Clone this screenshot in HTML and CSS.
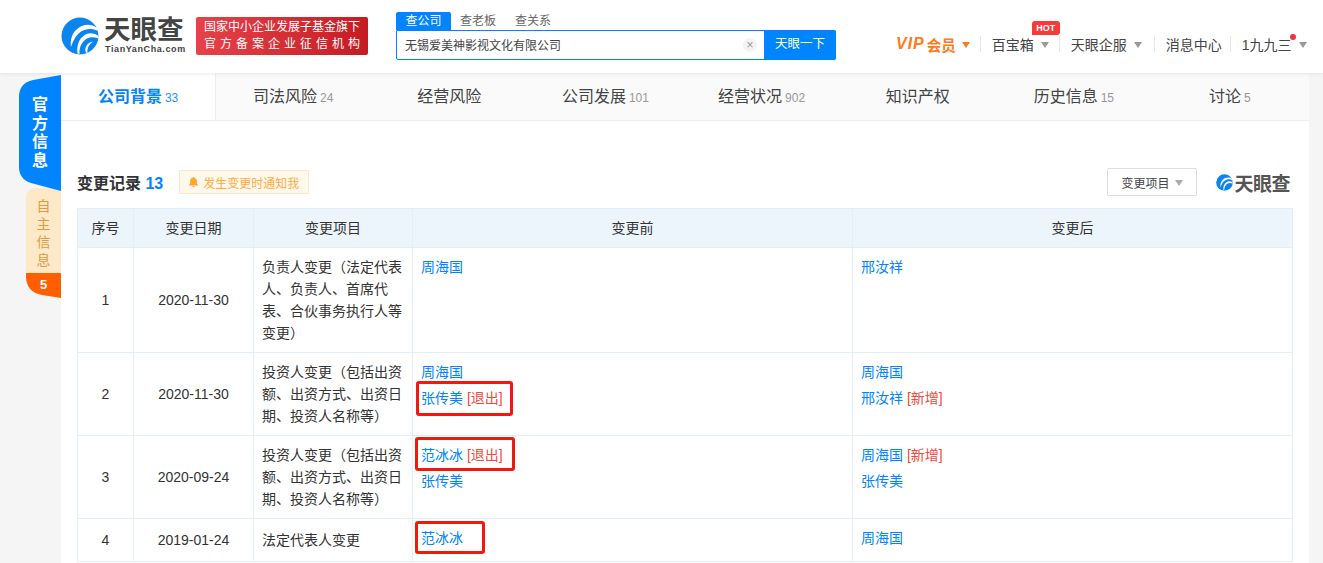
FILE: index.html
```html
<!DOCTYPE html>
<html>

<head>
    <meta charset="UTF-8">
    <title>变更记录</title>
    <link rel="stylesheet" href="styles.css">
</head>

<body>
    <div class="header">
        <div class="logo">
            <svg class="logo-mark" viewBox="0 0 38 38">
                <circle cx="19" cy="19" r="18.5" fill="#0b85ee" />
                <path d="M36 11C30 6 21 7 15 13C11 17 9 23 10 30C12 24 15 18 20 14.500C25 11.500 31 11 37 14Z" fill="#fff" />
                <path d="M37.500 19C33 15.500 27 15.500 23 18.500C18 22 15.500 28 16.500 36.500L18.500 37C18 30 21 24.500 26 21.500C29 19.800 33 19.800 37.500 21.500Z" fill="#fff" />
                <path d="M32 24.500C28 25 25.500 27.500 24.500 31C24 33 24.500 35 25.500 36L26.500 35.800C26 31 28 27.500 32 24.500Z" fill="#fff" />
            </svg>
            <div class="logo-text">
                <div class="logo-name">天眼查</div>
                <div class="logo-site">TianYanCha.com</div>
            </div>
        </div>
        <div class="badge">
            <div>国家中小企业发展子基金旗下</div>
            <div class="badge-wide">官方备案企业征信机构</div>
        </div>
        <div class="search">
            <div class="search-tabs">
                <span class="search-tab active">查公司</span>
                <span class="search-tab">查老板</span>
                <span class="search-tab">查关系</span>
            </div>
            <div class="search-box">
                <div class="search-input">无锡爱美神影视文化有限公司</div>
                <span class="search-clear">&times;</span>
                <div class="search-btn">天眼一下</div>
            </div>
        </div>
        <div class="nav">
            <div class="nav-item vip"><span class="vip-mark">VIP</span>会员<i class="caret"></i></div>
            <div class="nav-item">百宝箱<i class="caret"></i><span class="hot">HOT</span></div>
            <div class="nav-item">天眼企服<i class="caret"></i></div>
            <div class="nav-item nav-msg">消息中心</div>
            <div class="nav-item user">1九九三<span class="dot"></span><i class="caret"></i></div>
        </div>
    </div>

    <div class="page">
        <div class="side">
            <div class="side-main">官方信息</div>
            <div class="side-own">
                <div class="side-own-text">自主信息</div>
                <div class="side-own-num">5</div>
            </div>
        </div>

        <div class="main">
            <div class="tabs">
                <div class="tab active">公司背景<span class="num">33</span></div>
                <div class="tab">司法风险<span class="num">24</span></div>
                <div class="tab">经营风险</div>
                <div class="tab">公司发展<span class="num">101</span></div>
                <div class="tab">经营状况<span class="num">902</span></div>
                <div class="tab">知识产权</div>
                <div class="tab">历史信息<span class="num">15</span></div>
                <div class="tab">讨论<span class="num">5</span></div>
            </div>

            <div class="section">
                <div class="section-head">
                    <div class="section-title">变更记录 <span class="count">13</span></div>
                    <div class="notify">
                        <svg class="bell" viewBox="0 0 12 12">
                            <path d="M6 0.500C6.500 0.500 6.900 0.900 6.900 1.400C8.700 1.800 9.700 3.200 9.700 5V7.800L11 9.300V9.800H1V9.300L2.300 7.800V5C2.300 3.200 3.300 1.800 5.100 1.400C5.100 0.900 5.500 0.500 6 0.500ZM4.700 10.400H7.300C7.300 11.100 6.700 11.700 6 11.700C5.300 11.700 4.700 11.100 4.700 10.400Z" fill="#ffa72a" />
                        </svg>
                        发生变更时通知我
                    </div>
                    <div class="filter">变更项目<i class="caret"></i></div>
                    <div class="mini-logo">
                        <svg class="mini-mark" viewBox="0 0 38 38">
                            <circle cx="19" cy="19" r="18.5" fill="#0b85ee" />
                            <path d="M36 11C30 6 21 7 15 13C11 17 9 23 10 30C12 24 15 18 20 14.500C25 11.500 31 11 37 14Z" fill="#fff" />
                            <path d="M37.500 19C33 15.500 27 15.500 23 18.500C18 22 15.500 28 16.500 36.500L18.500 37C18 30 21 24.500 26 21.500C29 19.800 33 19.800 37.500 21.500Z" fill="#fff" />
                        </svg>
                        <span>天眼查</span>
                    </div>
                </div>

                <table class="records">
                    <colgroup>
                        <col class="c-no">
                        <col class="c-date">
                        <col class="c-item">
                        <col class="c-before">
                        <col class="c-after">
                    </colgroup>
                    <tr>
                        <th>序号</th>
                        <th>变更日期</th>
                        <th>变更项目</th>
                        <th>变更前</th>
                        <th>变更后</th>
                    </tr>
                    <tr>
                        <td class="mid">1</td>
                        <td class="mid">2020-11-30</td>
                        <td>负责人变更（法定代表人、负责人、首席代表、合伙事务执行人等变更）</td>
                        <td class="top">
                            <div class="name">周海国</div>
                        </td>
                        <td class="top">
                            <div class="name">邢汝祥</div>
                        </td>
                    </tr>
                    <tr>
                        <td class="mid">2</td>
                        <td class="mid">2020-11-30</td>
                        <td>投资人变更（包括出资额、出资方式、出资日期、投资人名称等）</td>
                        <td class="top">
                            <div class="name">周海国</div>
                            <div class="name">张传美 <span class="tag">[退出]</span><span class="mark mark-a"></span></div>
                        </td>
                        <td class="top">
                            <div class="name">周海国</div>
                            <div class="name">邢汝祥 <span class="tag">[新增]</span></div>
                        </td>
                    </tr>
                    <tr>
                        <td class="mid">3</td>
                        <td class="mid">2020-09-24</td>
                        <td>投资人变更（包括出资额、出资方式、出资日期、投资人名称等）</td>
                        <td class="top">
                            <div class="name">范冰冰 <span class="tag">[退出]</span><span class="mark mark-b"></span></div>
                            <div class="name">张传美</div>
                        </td>
                        <td class="top">
                            <div class="name">周海国 <span class="tag">[新增]</span></div>
                            <div class="name">张传美</div>
                        </td>
                    </tr>
                    <tr>
                        <td class="mid">4</td>
                        <td class="mid">2019-01-24</td>
                        <td>法定代表人变更</td>
                        <td class="top">
                            <div class="name">范冰冰<span class="mark mark-c"></span></div>
                        </td>
                        <td class="top">
                            <div class="name">周海国</div>
                        </td>
                    </tr>
                </table>
            </div>
        </div>
    </div>
</body>

</html>
```

FILE: styles.css
```css
* {
    box-sizing: border-box;
}

html,
body {
    height: 563px;
    overflow: hidden;
}

body {
    margin: 0;
    background-color: #f5f5f5;
    color: #333;
    font-family: "Liberation Sans", "Noto Sans CJK SC", sans-serif;
    font-size: 14px;
}

.caret {
    display: inline-block;
    width: 0;
    height: 0;
    margin-top: 1px;
    border-left: 4.5px solid transparent;
    border-right: 4.5px solid transparent;
    border-top: 6px solid #999;
}

/* header */
.header {
    display: flex;
    height: 73px;
    padding: 12px 0 0 61px;
    background-color: #fff;
    box-shadow: 0 1px 4px rgba(0, 0, 0, 0.08);
    position: relative;
    z-index: 2;
}

.logo {
    display: flex;
    height: 38px;
    margin-top: 5px;
}

.logo-mark {
    width: 38px;
    height: 38px;
}

.logo-text {
    margin-left: 5px;
    width: 92px;
}

.logo-name {
    height: 27px;
    color: #444;
    font-size: 26.500px;
    font-weight: bold;
    line-height: 26px;
}

.logo-site {
    color: #444;
    font-size: 9px;
    font-weight: bold;
    line-height: 10px;
    letter-spacing: 0.600px;
    padding-left: 1px;
}

.badge {
    width: 172px;
    height: 38px;
    margin-top: 5px;
    padding: 2px 8px;
    border-radius: 2px;
    background: linear-gradient(90deg, #e6424a, #c51c22);
    color: #fff;
    font-size: 12px;
    line-height: 17px;
    white-space: nowrap;
}

.badge-wide {
    letter-spacing: 4px;
}

.search {
    width: 440px;
    margin-left: 28px;
}

.search-tabs {
    display: flex;
    height: 18px;
    font-size: 12px;
    line-height: 18px;
    color: #666;
}

.search-tab {
    margin-right: 19px;
}

.search-tab.active {
    width: 55px;
    margin-right: 9px;
    border-radius: 2px 2px 0 0;
    background-color: #0084ff;
    color: #fff;
    text-align: center;
}

.search-box {
    display: flex;
    align-items: center;
    height: 30px;
    border: 1px solid #0084ff;
    border-radius: 0 2px 2px 2px;
}

.search-input {
    flex: 1;
    padding: 0 0 2px 8px;
    color: #444;
    font-size: 12px;
}

.search-clear {
    width: 14px;
    height: 14px;
    margin-right: 7px;
    border-radius: 50%;
    background-color: #f3f3f3;
    color: #999;
    font-size: 12px;
    line-height: 14px;
    text-align: center;
}

.search-btn {
    width: 72px;
    height: 30px;
    margin-right: -1px;
    border-radius: 0 2px 2px 0;
    background-color: #0084ff;
    color: #fff;
    font-size: 12.500px;
    line-height: 28px;
    text-align: center;
}

.nav {
    display: flex;
    align-items: center;
    height: 16px;
    margin: 24px 0 0 60px;
    color: #444;
}

.nav-item {
    display: flex;
    align-items: center;
    position: relative;
    height: 16px;
    padding: 0 10px 0 11px;
    border-left: 1px solid #e8e8e8;
    white-space: nowrap;
}

.nav-item .caret {
    margin-left: 7px;
}

.nav-msg {
    margin-left: 2px;
    padding-right: 8px;
}

.vip {
    padding-left: 0;
    border-left: none;
    color: #ff7a1a;
    font-weight: bold;
    font-size: 14.500px;
}

.vip-mark {
    margin-right: 2px;
    font-size: 16px;
    font-style: italic;
    letter-spacing: 1px;
}

.vip .caret {
    margin-left: 6px;
    border-top-color: #ff7a1a;
}

.hot {
    position: absolute;
    left: 51px;
    top: -15px;
    width: 28px;
    height: 14px;
    border-radius: 3px 3px 3px 0;
    background-color: #f93a3a;
    color: #fff;
    font-size: 9px;
    font-weight: bold;
    line-height: 14px;
    text-align: center;
}

.dot {
    position: absolute;
    left: 59px;
    top: -2px;
    width: 6px;
    height: 6px;
    border-radius: 50%;
    background-color: #f5323c;
}

/* side tabs + main panel */
.page {
    display: flex;
    padding-left: 19px;
}

.side {
    width: 42px;
    padding-top: 2px;
}

.side-main {
    position: relative;
    z-index: 1;
    width: 42px;
    height: 116px;
    padding: 21px 13px 0 13px;
    background-color: #0084ff;
    clip-path: path("M42 0L14 5Q0 8 0 22V92Q0 104 12 108L42 116Z");
    color: #fff;
    font-size: 16px;
    font-weight: bold;
    line-height: 18.500px;
    text-align: center;
}

.side-own {
    width: 35px;
    height: 110px;
    margin: -3px 0 0 7px;
    clip-path: path("M10 0H35V110L16 107Q0 104 0 88V10Q0 0 10 0Z");
}

.side-own-text {
    height: 85px;
    padding: 9px 10px 0 10px;
    background-color: #fde8c8;
    color: #dd9c3e;
    line-height: 18px;
    text-align: center;
}

.side-own-num {
    height: 25px;
    background-color: #ff5f00;
    color: #fff;
    font-size: 13px;
    font-weight: bold;
    line-height: 23px;
    text-align: center;
}

.main {
    width: 1248px;
    height: 490px;
    background-color: #fff;
}

.tabs {
    display: flex;
    height: 48px;
    background-color: #fafafa;
    border-bottom: 1px solid #eee;
}

.tab {
    flex: 1 1 0;
    padding-right: 2px;
    color: #444;
    font-size: 16px;
    line-height: 47px;
    text-align: center;
    white-space: nowrap;
}

.tab.active {
    padding-right: 0;
    background-color: #fff;
    border-right: 1px solid #eee;
    color: #0084ff;
    font-weight: bold;
}

.num {
    margin-left: 3px;
    color: #999;
    font-size: 12px;
    font-weight: normal;
}

.tab.active .num {
    color: #2b8fff;
}

.section {
    padding: 47px 16px 0 16px;
}

.section-head {
    display: flex;
    align-items: center;
    height: 28px;
    margin-bottom: 12px;
}

.section-title {
    color: #333;
    font-size: 16px;
    font-weight: bold;
}

.count {
    color: #0084ff;
    font-size: 16px;
}

.notify {
    display: flex;
    align-items: center;
    width: 130px;
    height: 24px;
    margin-left: 16px;
    padding-left: 8px;
    border: 1px solid #ffe6c2;
    border-radius: 2px;
    background-color: #fff8ec;
    color: #ffab40;
    font-size: 12px;
    white-space: nowrap;
}

.bell {
    width: 11px;
    height: 12px;
    margin-right: 4px;
}

.filter {
    display: flex;
    align-items: center;
    justify-content: center;
    width: 90px;
    height: 28px;
    margin-left: auto;
    border: 1px solid #ddd;
    border-radius: 2px;
    color: #444;
    font-size: 12px;
}

.filter .caret {
    margin-left: 6px;
    border-top-color: #aaa;
}

.mini-logo {
    display: flex;
    align-items: center;
    gap: 1px;
    margin: 0 3px 0 19px;
    color: #555;
    font-size: 19px;
    font-weight: bold;
    letter-spacing: -0.500px;
}

.mini-mark {
    width: 17px;
    height: 17px;
}

/* table */
.records {
    width: 1216px;
    table-layout: fixed;
    border-collapse: collapse;
}

.c-no {
    width: 56px;
}

.c-date {
    width: 120px;
}

.c-item {
    width: 159px;
}

.c-before {
    width: 440px;
}

.records th,
.records td {
    border: 1px solid #e4eef6;
    padding: 8px;
    line-height: 22px;
    color: #333;
    font-weight: normal;
}

.records th {
    height: 39px;
    background-color: #edf5fc;
    text-align: center;
}

.records td.mid {
    text-align: center;
}

.records td.top {
    vertical-align: top;
}

.name {
    position: relative;
    margin-bottom: 4px;
    color: #0084ff;
}

.tag {
    color: #f04a3e;
}

/* red boxes drawn over the cells */
.mark {
    position: absolute;
    border: 3px solid #f2180c;
    border-radius: 3px;
}

.mark-a {
    left: -5px;
    top: -6px;
    width: 97px;
    height: 35px;
}

.mark-b {
    left: -6px;
    top: -7px;
    width: 100px;
    height: 34px;
}

.mark-c {
    left: -6px;
    top: -6px;
    width: 70px;
    height: 33px;
}
```
